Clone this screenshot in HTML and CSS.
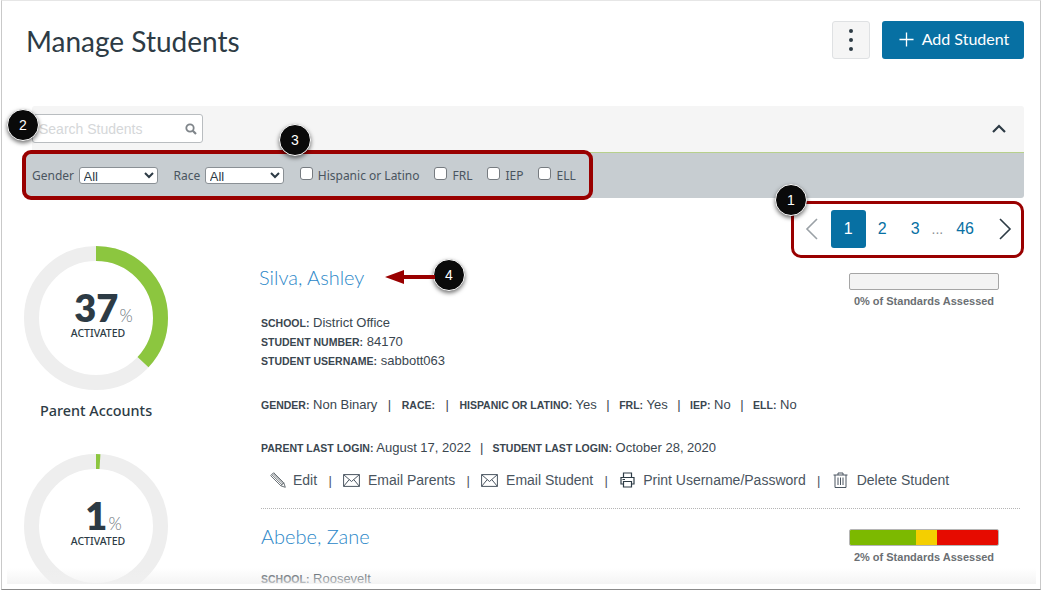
FILE: index.html
```html
<!DOCTYPE html>
<html lang="en">
<head>
<meta charset="utf-8">
<title>Manage Students</title>
<link rel="stylesheet" href="styles.css">
</head>
<body>
<div class="frame">
  <div class="viewport">
    <main class="page">
      <header class="page-head">
        <h1 class="title">Manage Students</h1>
        <div class="head-actions">
          <button class="kebab" aria-label="More"><span></span><span></span><span></span></button>
          <button class="add-btn">
            <svg class="add-plus" viewBox="0 0 16 16"><path d="M8 0.5V15.5M0.5 8H15.5" fill="none" stroke="#fff" stroke-width="1.4"/></svg>
            Add Student
          </button>
        </div>
      </header>

      <section class="filters">
        <div class="filters-top">
          <div class="search">
            <span class="search-ph">Search Students</span>
            <svg class="search-icon" viewBox="0 0 12 12"><circle cx="5" cy="5" r="3.7" fill="none" stroke="#7f858a" stroke-width="1.8"/><path d="M7.8 7.8L11 11" stroke="#7f858a" stroke-width="2.2"/></svg>
          </div>
          <svg class="collapse" viewBox="0 0 14 9"><path d="M1 8L7 2L13 8" fill="none" stroke="#2d3b45" stroke-width="2.2"/></svg>
        </div>
        <div class="filters-bar">
          <label class="f-label">Gender <select class="f-select"><option>All</option></select></label>
          <label class="f-label">Race <select class="f-select"><option>All</option></select></label>
          <label class="f-check"><input type="checkbox"><span>Hispanic or Latino</span></label>
          <label class="f-check"><input type="checkbox"><span>FRL</span></label>
          <label class="f-check"><input type="checkbox"><span>IEP</span></label>
          <label class="f-check"><input type="checkbox"><span>ELL</span></label>
        </div>
      </section>

      <nav class="pager">
        <svg class="pg-arrow" viewBox="0 0 13 22"><path d="M12 1L2 11L12 21" fill="none" stroke="#9aa1a6" stroke-width="1.6"/></svg>
        <span class="pg-cur">1</span>
        <a class="pg-n pg-2">2</a>
        <a class="pg-n pg-3">3</a>
        <span class="pg-dots">...</span>
        <a class="pg-n">46</a>
        <svg class="pg-arrow pg-next" viewBox="0 0 13 22"><path d="M1 1L11 11L1 21" fill="none" stroke="#2d3b45" stroke-width="1.6"/></svg>
      </nav>

      <div class="content">
        <aside class="stats">
          <div class="stat">
            <div class="donut">
              <svg viewBox="0 0 144 144"><circle cx="72" cy="72" r="64.5" class="d-bg"/><circle cx="72" cy="72" r="64.5" class="d-fg" pathLength="100" stroke-dasharray="37 63" /></svg>
              <div class="d-text"><div class="d-num">37<span class="d-pct">%</span></div><div class="d-cap">ACTIVATED</div></div>
            </div>
            <div class="stat-name">Parent Accounts</div>
          </div>
          <div class="stat">
            <div class="donut">
              <svg viewBox="0 0 144 144"><circle cx="72" cy="72" r="64.5" class="d-bg"/><circle cx="72" cy="72" r="64.5" class="d-fg" pathLength="100" stroke-dasharray="1 99" /></svg>
              <div class="d-text"><div class="d-num">1<span class="d-pct">%</span></div><div class="d-cap">ACTIVATED</div></div>
            </div>
          </div>
        </aside>

        <div class="students">
          <article class="student first">
            <div class="s-top">
              <a class="s-name">Silva, Ashley</a>
              <div class="s-progress">
                <div class="bar"></div>
                <div class="bar-label">0% of Standards Assessed</div>
              </div>
            </div>
            <div class="rows">
              <p class="row"><b>School:</b> District Office</p>
              <p class="row"><b>Student Number:</b> 84170</p>
              <p class="row"><b>Student Username:</b> sabbott063</p>
            </div>
            <p class="row row-demo"><b>Gender:</b> Non Binary<i>|</i><b>Race:</b><i>|</i><b>Hispanic or Latino:</b> Yes<i>|</i><b>FRL:</b> Yes<i>|</i><b>IEP:</b> No<i>|</i><b>ELL:</b> No</p>
            <p class="row row-login"><b>Parent Last Login:</b> August 17, 2022<i>|</i><b>Student Last Login:</b> October 28, 2020</p>
            <div class="actions">
              <a class="act">
                <svg class="ic" viewBox="0 0 16 16"><path d="M.7 3.700L3.700.7L13.800 10.800L15.300 15.300L10.800 13.800Z M1.800 2.600L12.300 13.100 M3 1.500L13.500 12 M10.800 13.800L13.800 10.800" fill="none" stroke="#5a6268" stroke-width=".9"/></svg>
                Edit</a>
              <i>|</i>
              <a class="act">
                <svg class="ic ic-mail" viewBox="0 0 17 13"><path d="M.6.6H16.400V12.400H.6Z M.6.6L8.500 7.500L16.400.6 M.6 12.400L6.200 5.600 M16.400 12.400L10.800 5.600" fill="none" stroke="#4a5560" stroke-width="1"/></svg>
                Email Parents</a>
              <i>|</i>
              <a class="act">
                <svg class="ic ic-mail" viewBox="0 0 17 13"><path d="M.6.6H16.400V12.400H.6Z M.6.6L8.500 7.500L16.400.6 M.6 12.400L6.200 5.600 M16.400 12.400L10.800 5.600" fill="none" stroke="#4a5560" stroke-width="1"/></svg>
                Email Student</a>
              <i>|</i>
              <a class="act act-shift">
                <svg class="ic ic-print" viewBox="0 0 15 16"><path d="M3.500 5V1H11.500V5 M3.500 12H1V5.500H14V12H11.500 M3.500 9.500H11.500V15H3.500Z M2.500 7.500H5" fill="none" stroke="#2d3b45" stroke-width="1.200"/></svg>
                Print Username/Password</a>
              <i>|</i>
              <a class="act act-shift">
                <svg class="ic ic-trash" viewBox="0 0 15 16"><path d="M.5 3H14.500 M5 3V1H10V3 M2 3V15.500H13V3 M5 5.500V13 M7.500 5.500V13 M10 5.500V13" fill="none" stroke="#4a5560" stroke-width="1"/></svg>
                Delete Student</a>
            </div>
          </article>

          <article class="student second">
            <div class="s-top">
              <a class="s-name">Abebe, Zane</a>
              <div class="s-progress">
                <div class="bar bar-fill"><span class="seg seg-g"></span><span class="seg seg-y"></span><span class="seg seg-r"></span></div>
                <div class="bar-label">2% of Standards Assessed</div>
              </div>
            </div>
            <div class="rows">
              <p class="row"><b>School:</b> Roosevelt</p>
            </div>
          </article>
        </div>
      </div>
    </main>
    <div class="fade"></div>
  </div>

  <div class="mark mark-filter"></div>
  <div class="mark mark-pager"></div>
  <span class="callout c1">1</span>
  <span class="callout c2">2</span>
  <span class="callout c3">3</span>
  <span class="callout c4">4</span>
  <svg class="arrow" viewBox="0 0 50 18"><path d="M0 9L19 2V7H50V11H19V16Z" fill="#990000"/></svg>
</div>
</body>
</html>
```

FILE: styles.css
```css
* { box-sizing: border-box; }
html, body { margin: 0; padding: 0; background: #fff; }
body { width: 1042px; height: 592px; overflow: hidden; font-family: "Liberation Sans", Arial, sans-serif; color: #2d3b45; }

.frame { position: relative; width: 1040px; height: 590px; margin-left: 1px; border: 1px solid #c9c9c9; border-top-color: #e6e6e6; border-bottom-color: #8a8a8a; }
.viewport { position: relative; height: 583px; margin: 0 4px 0 5px; overflow: hidden; background: #fff; }
.page { padding: 20px 12px 0 19px; }

.page-head { display: flex; justify-content: space-between; align-items: flex-start; height: 85px; }
.title { margin: 0; font: 400 28px/40px Lato, sans-serif; color: #2d3b45; }
.head-actions { display: flex; gap: 12px; }
.kebab { width: 38px; height: 38px; display: flex; flex-direction: column; align-items: center; justify-content: center; gap: 5px; padding: 0; background: #f5f5f5; border: 1px solid #dfe1e3; border-radius: 3px; }
.kebab span { width: 4px; height: 4px; border-radius: 50%; background: #2d3b45; }
.add-btn { width: 142px; height: 38px; display: flex; align-items: center; justify-content: center; gap: 8px; padding: 0 0 4px 2px; background: #0770a3; border: 0; border-radius: 3px; color: #fff; font: 400 16px Lato, sans-serif; }
.add-plus { width: 15px; height: 15px; margin-top: 3px; }

.filters { margin-left: 6px; }
.filters-top { height: 46px; display: flex; align-items: flex-start; justify-content: space-between; background: #f5f5f5; padding: 8px 18px 0 0; border-radius: 3px 3px 0 0; }
.search { width: 171px; height: 29px; display: flex; align-items: center; justify-content: space-between; padding: 0 5px 0 6px; background: #fff; border: 1px solid #b9bdc0; border-radius: 3px; }
.search-ph { font-size: 14px; color: #d5d7d9; }
.search-icon { width: 12px; height: 12px; }
.collapse { width: 14px; height: 9px; margin-top: 10px; }
.filters-bar { height: 46px; margin-left: -6px; padding-left: 6px; display: flex; align-items: center; background: #c7cdd1; border-top: 1px solid #b7d08c; border-radius: 0 0 3px 3px; font: 400 12px "Noto Sans", sans-serif; color: #4a5560; }
.f-label { display: flex; align-items: center; gap: 4.500px; margin-right: 16px; }
.f-select { width: 79px; height: 17px; font: 400 13px "Liberation Sans", sans-serif; color: #2d3b45; background: #fff; border: 1px solid #8a9095; border-radius: 3px; padding: 0; }
.f-check { display: flex; align-items: center; gap: 5px; margin-right: 15px; }
.f-check input { appearance: none; width: 13px; height: 13px; margin: 0 0 4px; background: #fff; border: 1px solid #767b80; border-radius: 3px; }

.pager { height: 50px; padding: 12px 12px 0 0; display: flex; align-items: center; justify-content: flex-end; font-size: 16px; color: #0770a3; }
.pg-arrow { width: 13px; height: 22px; margin-right: 13px; }
.pg-next { margin: 0 0 0 25px; }
.pg-cur { width: 35px; height: 38px; display: flex; align-items: center; justify-content: center; background: #0770a3; color: #fff; border-radius: 3px; }
.pg-n { color: #0770a3; }
.pg-2 { margin-left: 12px; }
.pg-3 { margin-left: 24px; }
.pg-dots { margin: 0 13px 0 12px; color: #8a9095; font-size: 14px; }

.content { display: flex; margin-top: -2px; }
.stats { width: 237px; margin-left: -2px; flex: none; }
.stat { width: 144px; height: 208px; }
.donut { position: relative; width: 144px; height: 144px; }
.donut svg { display: block; width: 144px; height: 144px; }
.d-bg, .d-fg { fill: none; stroke-width: 15; }
.d-bg { stroke: #eeeeee; }
.d-fg { stroke: #8cc63f; transform: rotate(-90deg); transform-origin: 72px 72px; }
.d-text { position: absolute; inset: 0; display: flex; flex-direction: column; align-items: center; justify-content: center; padding: 0 0 8px 4px; }
.d-num { margin-left: 11px; font: 800 38px/36px Lato, sans-serif; color: #2d3b45; }
.d-pct { font: 300 17px/16px Lato, sans-serif; color: #6b747a; margin-left: 1px; }
.d-cap { margin-top: 2px; font: 500 10.500px/12px "Noto Sans", sans-serif; color: #2d3b45; }
.stat-name { margin: 11px -4px 0; text-align: center; font: 500 14.400px/20px "Noto Sans", sans-serif; color: #2d3b45; }

.students { flex: 1; min-width: 0; padding: 17px 4px 0 0; }
.student.second { border-top: 1px dotted #b5b5b5; margin-top: 18px; padding-top: 13px; }
.s-top { display: flex; justify-content: space-between; align-items: flex-start; height: 52px; }
.second .s-top { height: 49px; }
.first .s-name { margin-left: -2px; }
.s-name { font: 300 20px/28px Lato, sans-serif; color: #2b87c8; }
.s-progress { width: 150px; margin-right: 21px; text-align: center; padding-top: 10px; }
.second .s-progress { padding-top: 7px; }
.bar { height: 17px; background: #f3f3f3; border: 1px solid #a5a5a5; border-radius: 2px; }
.bar-fill { display: flex; border-color: #b5b5b5; overflow: hidden; }
.seg { display: block; height: 100%; }
.seg-g { width: 66px; background: #7cb900; }
.seg-y { width: 21px; background: #f4cf00; }
.seg-r { flex: 1; background: #e60b00; }
.bar-label { margin: 4px -5px 0; font: 700 11px/14px "Liberation Sans", sans-serif; color: #6b6f73; white-space: nowrap; }

.rows { display: flex; flex-direction: column; gap: 3px; }
.row { margin: 0; font-size: 13px; line-height: 15px; color: #3a464f; white-space: nowrap; }
.row b { font-size: 10.500px; text-transform: uppercase; font-weight: 700; }
.row i { font-style: normal; margin: 0 9.500px; }
.row-demo i:nth-of-type(-n+2) { margin: 0 10.500px; }
.row-demo { margin-top: 28px; }
.row-login { margin-top: 27px; }
.row-login i { margin: 0 9px; }

.actions { display: flex; align-items: center; margin-top: 14px; padding-left: 9px; height: 20px; font-size: 14px; color: #4a5560; white-space: nowrap; }
.actions i { font-style: normal; margin: 0 11.250px; font-size: 13px; }
.act { display: flex; align-items: center; gap: 8px; }
.act:first-child { gap: 7px; }
.act-shift { margin-left: 1px; }
.act-shift:last-child { gap: 9px; }
.ic { width: 16px; height: 16px; }
.ic-mail { width: 17px; height: 13px; }
.ic-print { width: 15px; height: 16px; }
.ic-trash { width: 15px; height: 16px; }

.fade { position: absolute; left: 0; right: 0; bottom: 0; height: 16px; background: linear-gradient(to bottom, rgba(240,240,240,0), rgba(240,240,240,.75)); pointer-events: none; }

.mark { position: absolute; border: 4px solid #990000; }
.mark-filter { left: 20px; top: 149px; width: 571px; height: 50px; border-radius: 9px; }
.mark-pager { left: 789px; top: 200px; width: 233px; height: 57px; border-width: 3.500px; border-radius: 10px; }
.callout { position: absolute; width: 32px; height: 32px; display: flex; align-items: center; justify-content: center; border-radius: 50%; background: #0a0a0a; border: 1px solid #fff; box-shadow: 0 2px 4px rgba(0,0,0,.55); color: #fff; font: 400 14px "Liberation Sans", sans-serif; }
.c1 { left: 773px; top: 183px; }
.c2 { left: 5px; top: 108px; }
.c3 { left: 277px; top: 123px; }
.c4 { left: 431px; top: 258px; }
.arrow { position: absolute; left: 383px; top: 267px; width: 50px; height: 18px; }
```
